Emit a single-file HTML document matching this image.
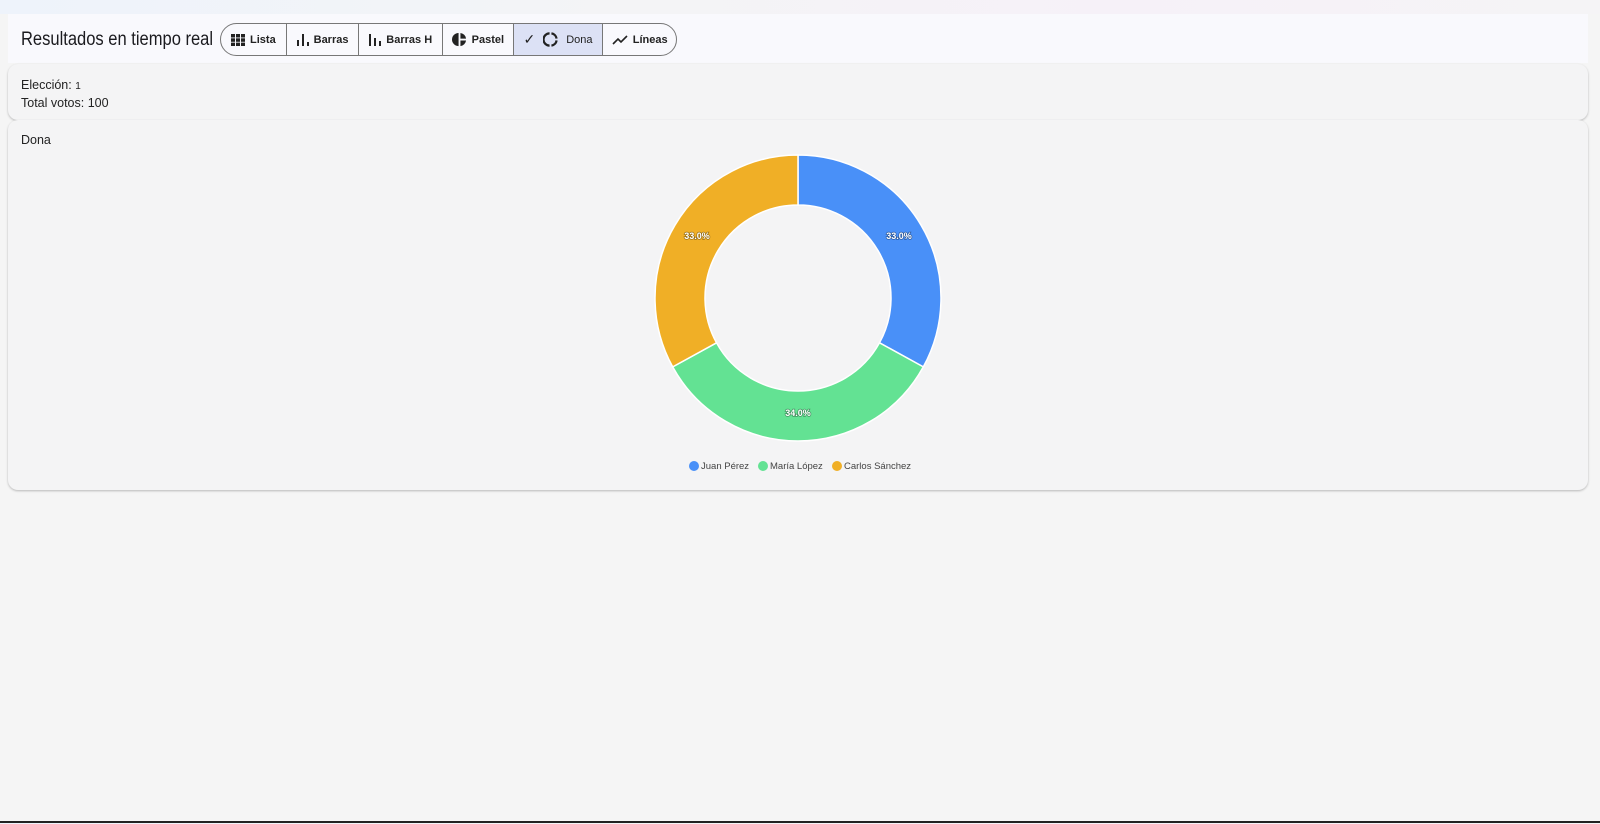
<!DOCTYPE html>
<html><head><meta charset="utf-8"><style>
*{box-sizing:border-box;margin:0;padding:0}
body{width:1600px;height:824px;overflow:hidden;font-family:"Liberation Sans",sans-serif;background:linear-gradient(90deg,#eef3fb,#f4f4f6 40%,#f6f1f8 70%,#f5f4f6);position:relative;color:#222}
.bg{position:absolute;left:0;top:14px;width:1600px;height:808px;background:#f5f5f5}
.hdr{position:absolute;left:8px;top:14px;width:1580px;height:49px;background:#f9f9fd}
.hdr h1{position:absolute;left:13px;top:15px;font-size:19px;font-weight:normal;color:#1b1b1f;transform:scaleX(0.87);transform-origin:left}
.grp{position:absolute;left:220px;top:23px;height:33px;width:457px;border:1px solid #777;border-radius:17px;display:flex;overflow:hidden;background:#f9f9fd}
.grp div{height:100%;display:flex;align-items:center;justify-content:center;font-size:11px;font-weight:bold;color:#222;border-right:1px solid #777;gap:5px}
.grp div:last-child{border-right:none}
.card{position:absolute;left:8px;width:1580px;background:#f4f4f5;border-radius:10px;box-shadow:0 1px 2px rgba(0,0,0,.25)}
.line{position:absolute;left:0;top:821px;width:1600px;height:2px;background:#222}
</style></head><body>
<div class="bg"></div>
<div class="hdr"><h1>Resultados en tiempo real</h1></div>
<div class="grp">
<div style="width:66px"><svg width="14" height="12"><rect x="0" y="0" width="4" height="3.5" fill="#222"/><rect x="5" y="0" width="4" height="3.5" fill="#222"/><rect x="10" y="0" width="4" height="3.5" fill="#222"/><rect x="0" y="4.3" width="4" height="3.5" fill="#222"/><rect x="5" y="4.3" width="4" height="3.5" fill="#222"/><rect x="10" y="4.3" width="4" height="3.5" fill="#222"/><rect x="0" y="8.6" width="4" height="3.4" fill="#222"/><rect x="5" y="8.6" width="4" height="3.4" fill="#222"/><rect x="10" y="8.6" width="4" height="3.4" fill="#222"/></svg>Lista</div>
<div style="width:73px"><svg width="12" height="12"><rect x="0" y="6" width="2" height="6" fill="#222"/><rect x="5" y="0" width="2" height="12" fill="#222"/><rect x="10" y="8" width="2" height="4" fill="#222"/></svg>Barras</div>
<div style="width:84px"><svg width="12" height="12"><rect x="0" y="0" width="2" height="12" fill="#222"/><rect x="5" y="4" width="2" height="8" fill="#222"/><rect x="10" y="7" width="2" height="5" fill="#222"/></svg>Barras H</div>
<div style="width:71px"><svg width="15" height="15" viewBox="0 0 16 16"><path d="M7 1A7 7 0 0 0 7 15Z M9 1A7 7 0 0 1 15 7H9Z M9 9H15A7 7 0 0 1 9 15Z" fill="#222"/></svg>Pastel</div>
<div style="width:90px;background:#dce1f5;font-weight:normal;gap:8px"><span style="font-size:14px">✓</span><svg width="15" height="15" viewBox="0 0 16 16"><path d="M7 1.5A6.5 6.5 0 0 0 7 14.5 M9 1.5A6.5 6.5 0 0 1 14.5 7 M14.5 9A6.5 6.5 0 0 1 9 14.5" stroke="#222" stroke-width="2.4" fill="none"/></svg><span style="font-weight:normal">Dona</span></div>
<div style="width:73px"><svg width="16" height="10"><path d="M1 9L6 4L9 7L15 1" stroke="#222" stroke-width="1.6" fill="none"/></svg>Líneas</div>
</div>
<div class="card" style="top:64px;height:56px"><div style="position:absolute;left:13px;top:13px;font-size:12.5px;line-height:16px">Elección: <span style="font-size:10px">1</span><br>Total votos: 100</div></div>
<div class="card" style="top:120px;height:370px"><div style="position:absolute;left:13px;top:13px;font-size:12.5px">Dona</div></div>
<svg style="position:absolute;left:0;top:0" width="1600" height="824">
<g stroke="#fff" stroke-width="1.5">
<path d="M798 155A143 143 0 0 1 923.3 366.9L879.5 342.8A93 93 0 0 0 798 205Z" fill="#4990f8"/>
<path d="M923.3 366.9A143 143 0 0 1 672.7 366.9L716.5 342.8A93 93 0 0 0 879.5 342.8Z" fill="#63e293"/>
<path d="M672.7 366.9A143 143 0 0 1 798 155L798 205A93 93 0 0 0 716.5 342.8Z" fill="#f0af26"/>
</g>
<g font-size="9" font-weight="bold" fill="#fff" text-anchor="middle" style="paint-order:stroke" stroke="rgba(0,0,0,.35)" stroke-width="1.5">
<text x="899" y="239">33.0%</text><text x="697" y="239">33.0%</text><text x="798" y="416">34.0%</text>
</g>
<g font-size="9.5" fill="#444">
<circle cx="694" cy="466" r="5" fill="#4990f8"/><text x="701" y="469">Juan Pérez</text>
<circle cx="763" cy="466" r="5" fill="#63e293"/><text x="770" y="469">María López</text>
<circle cx="837" cy="466" r="5" fill="#f0af26"/><text x="844" y="469">Carlos Sánchez</text>
</g>
</svg>
<div class="line"></div>
</body></html>
